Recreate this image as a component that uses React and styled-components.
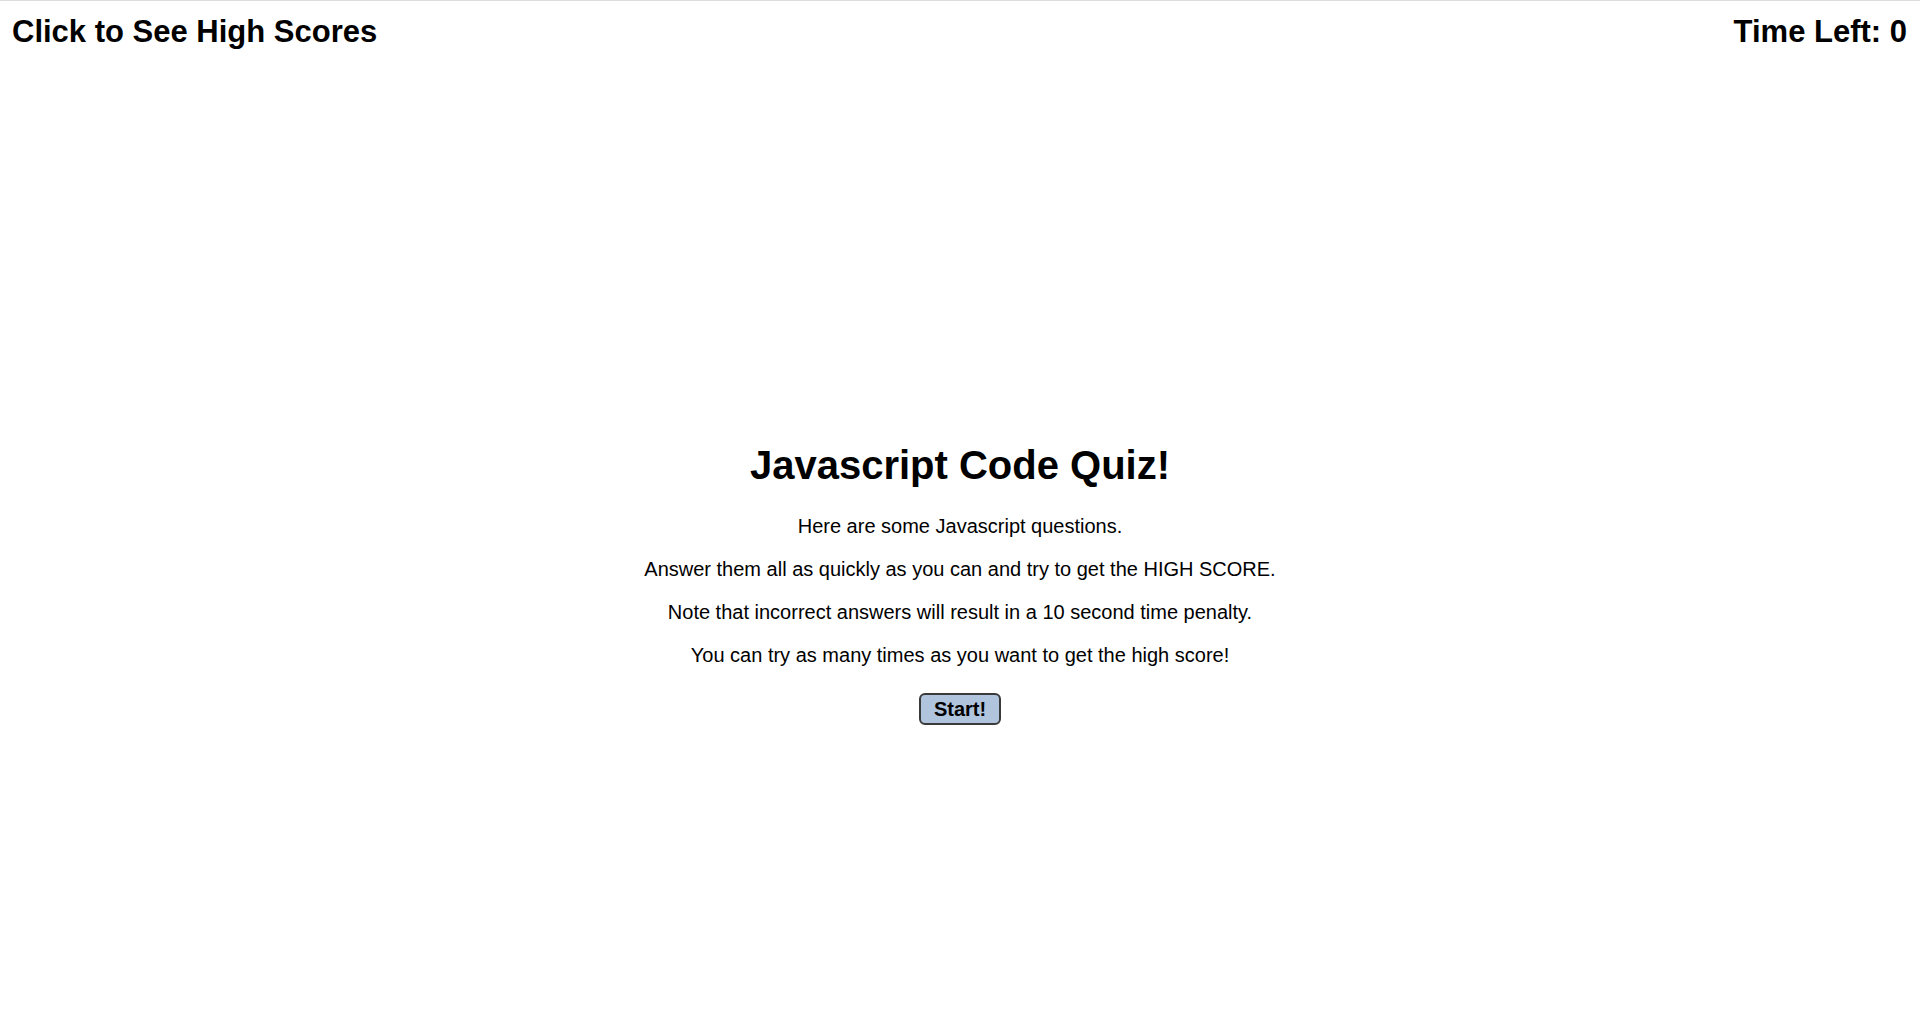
import React from 'react';
import styled, { createGlobalStyle } from 'styled-components';

const GlobalStyle = createGlobalStyle`
body {
  margin: 0;
  background: #ffffff;
  font-family: "Liberation Sans", Arial, sans-serif;
  color: #000000;
}
`;

const Page = styled.div`
min-height: 1022px;
border-top: 1px solid #dcdcdc;
`;

const Header = styled.header`
display: flex;
justify-content: space-between;
align-items: center;
padding: 13px 13px 0 12px;
`;

const HeaderText = styled.h2`
margin: 0;
font-size: 31px;
line-height: 36px;
font-weight: 700;
cursor: ${props => (props.link ? 'pointer' : 'default')};
`;

const Main = styled.main`
display: flex;
flex-direction: column;
align-items: center;
padding-top: 392px;
`;

const Title = styled.h1`
margin: 0 0 27px;
font-size: 40px;
line-height: 46px;
font-weight: 700;
`;

const Intro = styled.p`
margin: 0 0 20px;
font-size: 20px;
line-height: 23px;
text-align: center;
`;

const StartButton = styled.button`
margin-top: 6px;
padding: 3px 13px;
font-family: "Liberation Sans", Arial, sans-serif;
font-size: 20px;
line-height: 22px;
font-weight: 700;
color: #000000;
background: #b0c4de;
border: 2px solid #3a3a3a;
border-radius: 6px;
cursor: pointer;
`;

const lines = [
    'Here are some Javascript questions.',
    'Answer them all as quickly as you can and try to get the HIGH SCORE.',
    'Note that incorrect answers will result in a 10 second time penalty.',
    'You can try as many times as you want to get the high score!',
];

export default function App() {
    return (
        <Page>
            <GlobalStyle />
            <Header>
                <HeaderText link>Click to See High Scores</HeaderText>
                <HeaderText>Time Left: 0</HeaderText>
            </Header>
            <Main>
                <Title>Javascript Code Quiz!</Title>
                {lines.map(line => (
                    <Intro key={line}>{line}</Intro>
                ))}
                <StartButton>Start!</StartButton>
            </Main>
        </Page>
    )
}
